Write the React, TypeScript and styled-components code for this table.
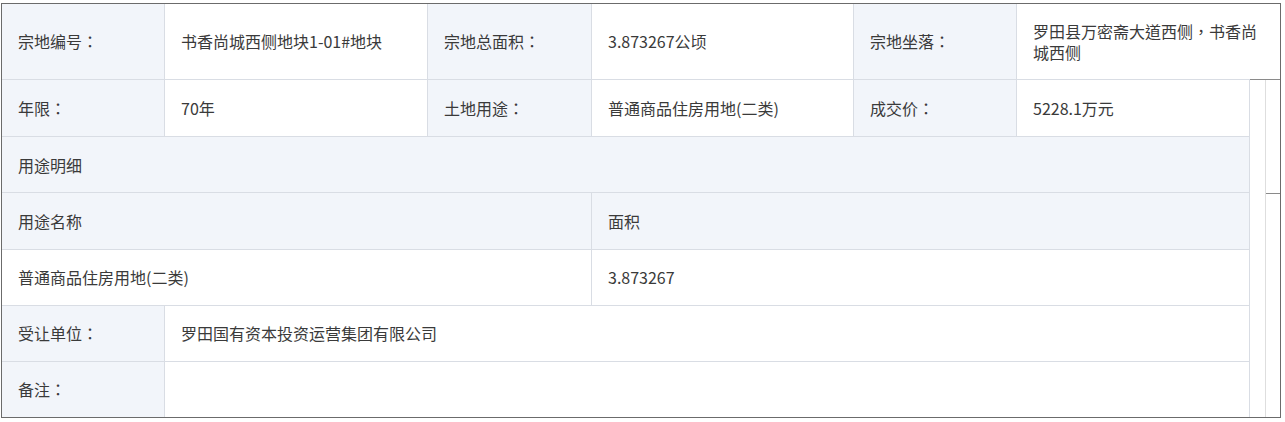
import styled, { createGlobalStyle } from 'styled-components'

const GlobalStyle = createGlobalStyle`
  body {
    margin: 0;
    background: #ffffff;
    font-family: "Noto Sans CJK SC", "Microsoft YaHei", sans-serif;
    font-size: 16px;
    color: #3a3a3a;
  }
`

const Frame = styled.div`
  margin: 3px 0 0 1px;
  width: 1280px;
  box-sizing: border-box;
  border: 1px solid #6b6b6b;
`

const TopRow = styled.div`
  display: grid;
  grid-template-columns: 163px 263px 164px 262px 163px 1fr;
  height: 76px;
  box-sizing: border-box;
  border-bottom: 1px solid #d9dde4;
`

const Lower = styled.div`
  display: flex;
`

const LowerTable = styled.div`
  width: 1247px;
  border-right: 1px solid #d9dde4;
`

const Strip = styled.div`
  flex: 1;
  display: flex;
  border-top: 1px solid #8a8a8a;
  margin-top: -1px;
`

const StripCol = styled.div`
  flex: 1;
  border-right: 1px solid #dedede;
  position: relative;
  &:last-child {
    border-right: none;
  }
`

const StripMark = styled.div`
  position: absolute;
  top: 113px;
  left: 0;
  right: 0;
  height: 1px;
  background: #8a8a8a;
`

const Cell = styled.div<{ $label?: boolean }>`
  display: flex;
  align-items: center;
  padding: 0 14px 0 16px;
  box-sizing: border-box;
  background: ${(p) => (p.$label ? '#f2f5fa' : '#ffffff')};
  border-right: 1px solid #d9dde4;
  line-height: 21px;
  &:last-child {
    border-right: none;
  }
`

const Label = styled(Cell).attrs({ $label: true })``

const Address = styled.span`
  font-family: "Noto Sans CJK TC", "Noto Sans CJK SC", sans-serif;
`

const Punct = styled.span`
  font-family: "Noto Sans CJK TC", "Noto Sans CJK SC", sans-serif;
`

const FullRow = styled.div<{ $h: number }>`
  display: flex;
  align-items: center;
  height: ${(p) => p.$h}px;
  box-sizing: border-box;
  padding-left: 16px;
  background: #f2f5fa;
  border-bottom: 1px solid #d9dde4;
`

const LowerRow = styled.div<{ $cols: string; $h: number; $last?: boolean }>`
  display: grid;
  grid-template-columns: ${(p) => p.$cols};
  height: ${(p) => p.$h}px;
  box-sizing: border-box;
  border-bottom: ${(p) => (p.$last ? 'none' : '1px solid #d9dde4')};
`

const App = () => {
  return (
    <>
      <GlobalStyle />
      <Frame>
        <TopRow>
          <Label>宗地编号<Punct>：</Punct></Label>
          <Cell>书香尚城西侧地块1-01#地块</Cell>
          <Label>宗地总面积<Punct>：</Punct></Label>
          <Cell>3.873267公顷</Cell>
          <Label>宗地坐落<Punct>：</Punct></Label>
          <Cell>
            <Address>罗田县万密斋大道西侧，书香尚城西侧</Address>
          </Cell>
        </TopRow>
        <Lower>
          <LowerTable>
            <LowerRow $cols="163px 263px 164px 262px 163px 1fr" $h={57}>
              <Label>年限<Punct>：</Punct></Label>
              <Cell>70年</Cell>
              <Label>土地用途<Punct>：</Punct></Label>
              <Cell>普通商品住房用地(二类)</Cell>
              <Label>成交价<Punct>：</Punct></Label>
              <Cell>5228.1万元</Cell>
            </LowerRow>
            <FullRow $h={56}>用途明细</FullRow>
            <LowerRow $cols="590px 1fr" $h={57}>
              <Label>用途名称</Label>
              <Label>面积</Label>
            </LowerRow>
            <LowerRow $cols="590px 1fr" $h={56}>
              <Cell>普通商品住房用地(二类)</Cell>
              <Cell>3.873267</Cell>
            </LowerRow>
            <LowerRow $cols="163px 1fr" $h={56}>
              <Label>受让单位<Punct>：</Punct></Label>
              <Cell>罗田国有资本投资运营集团有限公司</Cell>
            </LowerRow>
            <LowerRow $cols="163px 1fr" $h={55} $last>
              <Label>备注<Punct>：</Punct></Label>
              <Cell></Cell>
            </LowerRow>
          </LowerTable>
          <Strip>
            <StripCol />
            <StripCol>
              <StripMark />
            </StripCol>
          </Strip>
        </Lower>
      </Frame>
    </>
  )
}

export default App
